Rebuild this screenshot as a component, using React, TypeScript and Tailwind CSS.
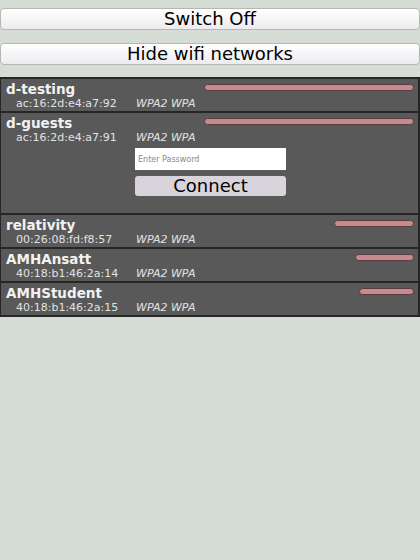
import React from 'react';

type Network = {
  ssid: string;
  mac: string;
  security: string;
  bar: string;
  open?: boolean;
};

const networks: Network[] = [
  { ssid: 'd-testing', mac: 'ac:16:2d:e4:a7:92', security: 'WPA2 WPA', bar: 'w-[210px]' },
  { ssid: 'd-guests', mac: 'ac:16:2d:e4:a7:91', security: 'WPA2 WPA', bar: 'w-[210px]', open: true },
  { ssid: 'relativity', mac: '00:26:08:fd:f8:57', security: 'WPA2 WPA', bar: 'w-[80px]' },
  { ssid: 'AMHAnsatt', mac: '40:18:b1:46:2a:14', security: 'WPA2 WPA', bar: 'w-[59px]' },
  { ssid: 'AMHStudent', mac: '40:18:b1:46:2a:15', security: 'WPA2 WPA', bar: 'w-[55px]' },
];

const TopButton: React.FC<{ label: string }> = ({ label }) => (
  <button className="block w-full h-[22px] rounded-[4px] border border-[#b4b8b4] bg-gradient-to-b from-white to-[#ececf0] text-[18px] leading-none text-black">
    {label}
  </button>
);

const NetworkRow: React.FC<{ n: Network }> = ({ n }) => (
  <div className="border-b-2 border-[#262626] pl-[5px] pr-[4px] pt-[2px] pb-[1px]">
    <div className="flex items-start justify-between">
      <span className="text-[13.5px] leading-[16px] font-bold text-[#f2f2f2]">{n.ssid}</span>
      <div className={`${n.bar} h-[7px] mt-[3px] rounded-full border border-[#5a3c3e] bg-[#c68b8e]`} />
    </div>
    <div className="flex text-[11px] leading-[13px] text-[#e2e2e2]">
      <span className="w-[130px] shrink-0 pl-[10px]">{n.mac}</span>
      <span className="italic">{n.security}</span>
    </div>
    {n.open && (
      <div className="ml-[129px] mt-[4px] mb-[16px] w-[151px] flex flex-col gap-[6px]">
        <input
          type="password"
          placeholder="Enter Password"
          className="block h-[22px] bg-white px-[3px] text-[8px] text-black placeholder-[#888] outline-none"
        />
        <button className="block h-[20px] rounded-[3px] bg-[#d9d4dc] text-[18px] leading-none text-black">
          Connect
        </button>
      </div>
    )}
  </div>
);

export default function App() {
  return (
    <div
      className="w-[420px] h-[560px] bg-[#d6ddd6] pt-[8px]"
      style={{ fontFamily: '"DejaVu Sans", sans-serif' }}
    >
      <TopButton label="Switch Off" />
      <div className="mt-[13px]">
        <TopButton label="Hide wifi networks" />
      </div>
      <div className="mt-[12px] border-t-2 border-l border-r-2 border-[#262626] bg-[#595959]">
        {networks.map((n) => (
          <NetworkRow key={n.ssid} n={n} />
        ))}
      </div>
    </div>
  );
}
